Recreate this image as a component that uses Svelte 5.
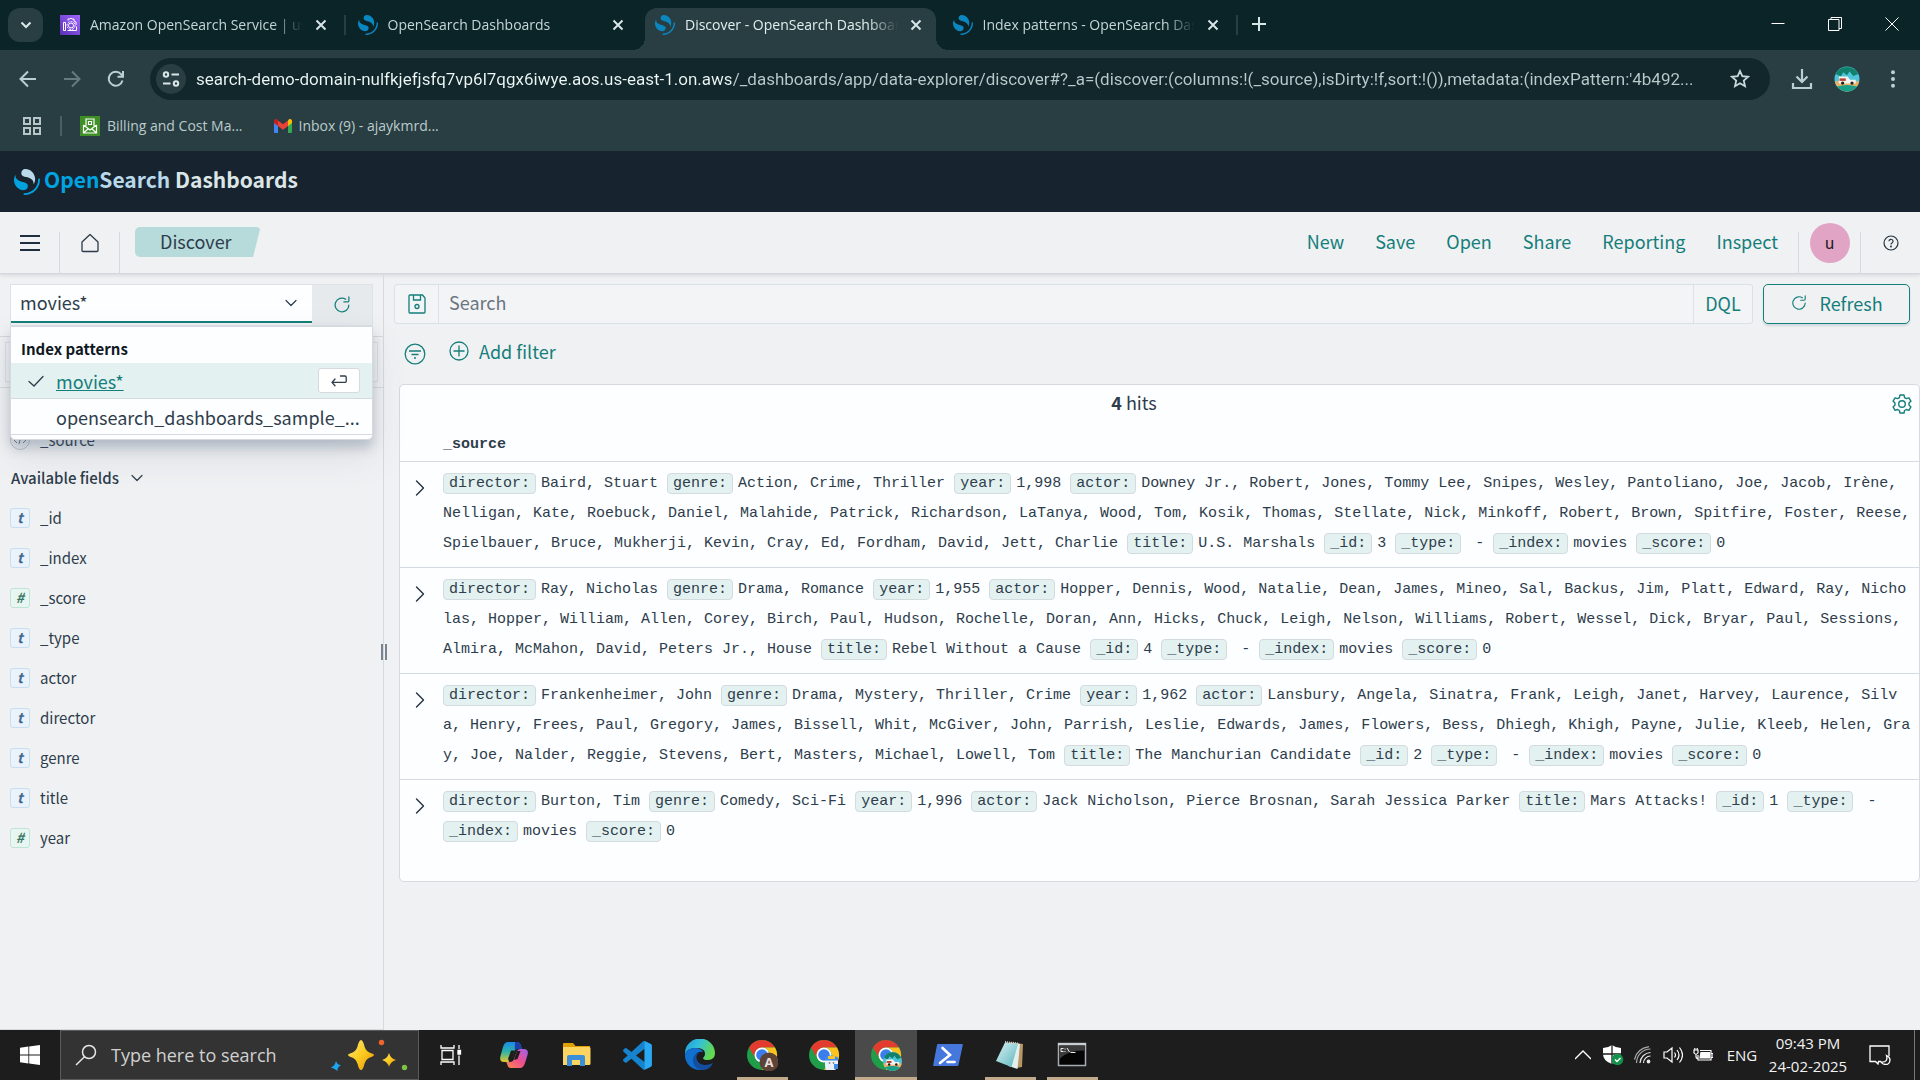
<script>
  const tabs = [
    { title: 'Amazon OpenSearch Service | us-east-1', icon: 'aws' },
    { title: 'OpenSearch Dashboards', icon: 'os' },
    { title: 'Discover - OpenSearch Dashboards', icon: 'os', active: true },
    { title: 'Index patterns - OpenSearch Dashboards', icon: 'os' }
  ];

  const url =
    "search-demo-domain-nulfkjefjsfq7vp6l7qgx6iwye.aos.us-east-1.on.aws/_dashboards/app/data-explorer/discover#?_a=(discover:(columns:!(_source),isDirty:!f,sort:!()),metadata:(indexPattern:'4b492...";

  const menu = ['New', 'Save', 'Open', 'Share', 'Reporting', 'Inspect'];

  const fields = [
    ['t', '_id'],
    ['t', '_index'],
    ['#', '_score'],
    ['t', '_type'],
    ['t', 'actor'],
    ['t', 'director'],
    ['t', 'genre'],
    ['t', 'title'],
    ['#', 'year']
  ];

  const nbsp = '\u00a0';
  const meta = (id) => [
    ['_id', id],
    ['_type', nbsp + '-'],
    ['_index', 'movies'],
    ['_score', '0']
  ];

  const hits = [
    [
      ['director', 'Baird, Stuart'],
      ['genre', 'Action, Crime, Thriller'],
      ['year', '1,998'],
      ['actor', 'Downey Jr., Robert, Jones, Tommy Lee, Snipes, Wesley, Pantoliano, Joe, Jacob, Irène, Nelligan, Kate, Roebuck, Daniel, Malahide, Patrick, Richardson, LaTanya, Wood, Tom, Kosik, Thomas, Stellate, Nick, Minkoff, Robert, Brown, Spitfire, Foster, Reese, Spielbauer, Bruce, Mukherji, Kevin, Cray, Ed, Fordham, David, Jett, Charlie'],
      ['title', 'U.S. Marshals'],
      ...meta('3')
    ],
    [
      ['director', 'Ray, Nicholas'],
      ['genre', 'Drama, Romance'],
      ['year', '1,955'],
      ['actor', 'Hopper, Dennis, Wood, Natalie, Dean, James, Mineo, Sal, Backus, Jim, Platt, Edward, Ray, Nicholas, Hopper, William, Allen, Corey, Birch, Paul, Hudson, Rochelle, Doran, Ann, Hicks, Chuck, Leigh, Nelson, Williams, Robert, Wessel, Dick, Bryar, Paul, Sessions, Almira, McMahon, David, Peters Jr., House'],
      ['title', 'Rebel Without a Cause'],
      ...meta('4')
    ],
    [
      ['director', 'Frankenheimer, John'],
      ['genre', 'Drama, Mystery, Thriller, Crime'],
      ['year', '1,962'],
      ['actor', 'Lansbury, Angela, Sinatra, Frank, Leigh, Janet, Harvey, Laurence, Silva, Henry, Frees, Paul, Gregory, James, Bissell, Whit, McGiver, John, Parrish, Leslie, Edwards, James, Flowers, Bess, Dhiegh, Khigh, Payne, Julie, Kleeb, Helen, Gray, Joe, Nalder, Reggie, Stevens, Bert, Masters, Michael, Lowell, Tom'],
      ['title', 'The Manchurian Candidate'],
      ...meta('2')
    ],
    [
      ['director', 'Burton, Tim'],
      ['genre', 'Comedy, Sci-Fi'],
      ['year', '1,996'],
      ['actor', 'Jack Nicholson, Pierce Brosnan, Sarah Jessica Parker'],
      ['title', 'Mars Attacks!'],
      ...meta('1')
    ]
  ];

  const apps = [
    { name: 'Copilot', icon: 'copilot' },
    { name: 'File Explorer', icon: 'folder' },
    { name: 'Visual Studio Code', icon: 'vscode' },
    { name: 'Microsoft Edge', icon: 'edge' },
    { name: 'Chrome profile A', icon: 'chromeA', open: true },
    { name: 'Chrome', icon: 'chromeB' },
    { name: 'Chrome beach profile', icon: 'chromeC', active: true },
    { name: 'PowerShell', icon: 'powershell' },
    { name: 'Notepad', icon: 'notepad', open: true },
    { name: 'Command Prompt', icon: 'cmd', open: true }
  ];
</script>

{#snippet mark(size, main, top)}
  <svg width={size} height={size} viewBox="0 0 64 64" aria-hidden="true">
    <path fill={main} d="M61.7374 23.5C60.4878 23.5 59.4748 24.513 59.4748 25.7626C59.4748 44.3813 44.3813 59.4748 25.7626 59.4748C24.513 59.4748 23.5 60.4878 23.5 61.7374C23.5 62.987 24.513 64 25.7626 64C46.8805 64 64 46.8805 64 25.7626C64 24.513 62.987 23.5 61.7374 23.5Z" />
    <path fill={top} d="M48.0814 38C50.2572 34.4505 52.3615 29.7178 51.9475 23.0921C51.0899 9.36725 38.6589 -1.04463 26.9206 0.0837327C22.3253 0.525465 17.6068 4.2712 18.026 10.9805C18.2082 13.8961 19.6352 15.6169 21.9544 16.9399C24.1618 18.1992 26.9978 18.9969 30.2128 19.9011C34.0962 20.9934 38.6009 22.2203 42.063 24.7717C46.2125 27.8295 49.0491 31.3743 48.0814 38Z" />
    <path fill={main} d="M3.91861 14C1.74276 17.5495 -0.361506 22.2822 0.0524931 28.9079C0.910072 42.6327 13.3411 53.0446 25.0794 51.9163C29.6747 51.4745 34.3932 47.7288 33.974 41.0195C33.7918 38.1039 32.3647 36.3831 30.0456 35.0601C27.8382 33.8008 25.0022 33.0031 21.7872 32.0989C17.9038 31.0066 13.3991 29.7797 9.93694 27.2283C5.78746 24.1705 2.95092 20.6257 3.91861 14Z" />
  </svg>
{/snippet}

{#snippet reload(size)}
  <svg width={size} height={size} viewBox="0 0 16 16" fill="currentColor" aria-hidden="true">
    <path d="M11.228 2.942a.5.5 0 1 1-.538.842A5 5 0 1 0 13 8a.5.5 0 1 1 1 0 6 6 0 1 1-2.772-5.058ZM14 1.5v3A1.5 1.5 0 0 1 12.5 6h-3a.5.5 0 0 1 0-1h3a.5.5 0 0 0 .5-.5v-3a.5.5 0 1 1 1 0Z" />
  </svg>
{/snippet}

{#snippet chevron()}
  <svg width="16" height="16" viewBox="0 0 16 16" fill="none" stroke="currentColor" stroke-width="1.2" stroke-linecap="round" stroke-linejoin="round" aria-hidden="true">
    <path d="M3 5.5l5 5 5-5" />
  </svg>
{/snippet}

{#snippet beach(x, y, r)}
  <g transform="translate({x} {y}) scale({r})">
    <circle r="1" fill="#4fc3d9" />
    <path d="M-.9-.4A1 1 0 0 1 .9-.4L.5-.25.2-.6 0-.3-.3-.55-.5-.2z" fill="#11806d" />
    <path d="M-.98.2Q0 0 .98.2A1 1 0 0 1-.98.2z" fill="#e9b26b" />
    <path d="M-.8.6Q0 .35.8.6A1 1 0 0 1-.8.6z" fill="#19a08a" />
    <path d="M-.65-.2h.7l.2.25h.45v.3h-1.35z" fill="#f4f4f0" />
    <path d="M-.6-.05h.5v.2h-.5z" fill="#b5402f" />
    <circle cx="-.35" cy=".32" r=".13" fill="#222" />
    <circle cx=".4" cy=".32" r=".13" fill="#222" />
  </g>
{/snippet}

{#snippet chrome()}
  <circle cx="16" cy="16" r="15" fill="#1f9d48" />
  <path d="M3 8.5A15 15 0 0 1 29 8.5H16A7.5 7.5 0 0 0 9.5 19.75z" fill="#e33b2e" />
  <path d="M29 8.5A15 15 0 0 1 16 31l6.5-11.25A7.5 7.5 0 0 0 16 8.5z" fill="#fcc31e" />
  <circle cx="16" cy="16" r="7.5" fill="#fff" />
  <circle cx="16" cy="16" r="5.8" fill="#3b7ded" />
{/snippet}

<div class="screen">
  <header class="browser">
    <div class="strip">
      <button class="tab-search" aria-label="Search tabs">
        <svg width="12" height="12" viewBox="0 0 12 12" fill="none" stroke="#dce9ea" stroke-width="2"><path d="M1.5 3.5L6 8l4.500-4.500" /></svg>
      </button>
      <div class="tabs">
        {#each tabs as tab, i}
          <div class="tab" class:active={tab.active} class:ruled={i === 0 || i === 3}>
            {#if tab.icon === 'aws'}
              <svg width="20" height="20" viewBox="0 0 20 20" fill="none" stroke="#fff" aria-hidden="true">
                <defs><linearGradient id="aws" x1="0" y1="1" x2="1" y2="0"><stop stop-color="#5a30b5" /><stop offset="1" stop-color="#a166ff" /></linearGradient></defs>
                <rect width="20" height="20" fill="url(#aws)" stroke="none" />
                <circle cx="11" cy="10.500" r="2.500" />
                <circle cx="11" cy="10.500" r="4" stroke-dasharray="2 1" />
                <path d="M3.500 7.500v8h2v-8zM7.500 15.500h9v-4M8 5.500V4h2l1-1 1 1h2v2l2 1v3" />
              </svg>
            {:else}
              {@render mark(20, '#0c86c0', '#0c86c0')}
            {/if}
            <a class="tab-title" href="#tab-{i}">{tab.title}</a>
            <button class="tab-close" aria-label="Close tab">
              <svg width="12" height="12" viewBox="0 0 12 12" stroke="#d8e6e8" stroke-width="2"><path d="M1.500 1.500l9 9M10.500 1.500l-9 9" /></svg>
            </button>
          </div>
        {/each}
      </div>
      <button class="plain new-tab" aria-label="New tab">
        <svg width="14" height="14" viewBox="0 0 14 14" stroke="#d8e6e8" stroke-width="2"><path d="M7 0v14M0 7h14" /></svg>
      </button>
      <div class="window-controls">
        <button class="plain" aria-label="Minimise"><svg width="14" height="14" viewBox="0 0 14 14" stroke="#fff"><path d="M.5 6.500h13" /></svg></button>
        <button class="plain" aria-label="Restore"><svg width="14" height="14" viewBox="0 0 14 14" stroke="#fff" fill="none"><path d="M.5 2.500h10.500v11H.5zM3 2.500v-2h10.500v11H11" /></svg></button>
        <button class="plain" aria-label="Close"><svg width="14" height="14" viewBox="0 0 14 14" stroke="#fff"><path d="M.5.5l13 13M13.500.5l-13 13" /></svg></button>
      </div>
    </div>

    <div class="toolbar">
      <button class="plain nav-btn" aria-label="Back"><svg width="18" height="18" viewBox="0 0 18 18" fill="none" stroke="#b9d0d3" stroke-width="2"><path d="M17 9H2M9 1.500L1.500 9 9 16.500" /></svg></button>
      <button class="plain nav-btn" aria-label="Forward"><svg width="18" height="18" viewBox="0 0 18 18" fill="none" stroke="#657b7e" stroke-width="2"><path d="M1 9h15M9 1.500L16.500 9 9 16.500" /></svg></button>
      <button class="plain nav-btn" aria-label="Reload"><svg width="18" height="18" viewBox="0 0 18 18" fill="none" stroke="#b9d0d3" stroke-width="2"><path d="M15.500 10.500A7 7 0 1 1 14.200 4.300L16 6.200M16 1v5.800h-5.500" /></svg></button>
      <div class="omnibox">
        <button class="site-info" aria-label="Site information">
          <svg width="18" height="18" viewBox="0 0 18 18" fill="none" stroke="#d8e6e8" stroke-width="2"><circle cx="4" cy="4.500" r="2.200" /><path d="M9.500 4.500H17M1 13.500h7.500" /><circle cx="14" cy="13.500" r="2.200" /></svg>
        </button>
        <input class="url" type="text" aria-label="Address" value={url} />
        <button class="plain" aria-label="Bookmark this page"><svg width="20" height="20" viewBox="0 0 20 20" fill="none" stroke="#c9dadc" stroke-width="1.800"><path d="M10 2l2.300 5.200 5.700.6-4.200 3.800 1.200 5.600-5-2.900-5 2.900 1.200-5.600L2 7.800l5.700-.6z" /></svg></button>
      </div>
      <div class="toolbar-end">
        <button class="plain" aria-label="Downloads"><svg width="22" height="22" viewBox="0 0 22 22" fill="none" stroke="#b9d0d3" stroke-width="2.200"><path d="M11 1v13M5.500 8.500L11 14l5.500-5.500M2 15v5h18v-5" /></svg></button>
        <button class="plain" aria-label="Profile"><svg width="26" height="26" viewBox="0 0 26 26">{@render beach(13, 13, 12.5)}</svg></button>
        <button class="plain" aria-label="Menu"><svg width="6" height="18" viewBox="0 0 6 18" fill="#b9d0d3"><circle cx="3" cy="2.200" r="2" /><circle cx="3" cy="9" r="2" /><circle cx="3" cy="15.800" r="2" /></svg></button>
      </div>
    </div>

    <nav class="bookmarks" aria-label="Bookmarks">
      <button class="plain" aria-label="Apps"><svg width="20" height="20" viewBox="0 0 20 20" fill="none" stroke="#b7c6c8" stroke-width="2"><path d="M2 2h6v6H2zM12 2h6v6h-6zM2 12h6v6H2zM12 12h6v6h-6z" /></svg></button>
      <span class="rule"></span>
      <a href="#billing">
        <svg width="20" height="20" viewBox="0 0 20 20" fill="none" stroke="#fff" stroke-width="1.200" aria-hidden="true"><rect width="20" height="20" fill="#3f8f26" stroke="none" /><path d="M3.500 9v8h13V9M3.500 9l6.500 5 6.500-5M3.500 17l4.500-4M16.500 17L12 13M6 10V3h8v7M8.500 5.500h3v3h-3z" /></svg>
        Billing and Cost Ma...
      </a>
      <a href="#inbox">
        <svg width="18" height="14" viewBox="0 0 18 14" aria-hidden="true"><path d="M0 2v11a1 1 0 0 0 1 1h3V5z" fill="#4285f4" /><path d="M18 2v11a1 1 0 0 1-1 1h-3V5z" fill="#34a853" /><path d="M14 1.500V7l4-3V2c0-1.800-2-2.500-3.200-1.500z" fill="#fbbc04" /><path d="M0 2v2l4 3V1.500L3.200.5C2-.5 0 .2 0 2z" fill="#c5221f" /><path d="M4 1.500V7l5 3.800L14 7V1.500L9 5.300z" fill="#ea4335" /></svg>
        Inbox (9) - ajaykmrd...
      </a>
    </nav>
  </header>

  <div class="brandbar">
    <a class="brand" href="#home">
      {@render mark(26, '#00a3e0', '#b9d9eb')}
      <span class="brand-text"><span class="open">Open</span><span class="search">Search</span> Dashboards</span>
    </a>
  </div>

  <nav class="appnav" aria-label="Application">
    <button class="plain nav-cell menu-cell" aria-label="Toggle navigation"><svg width="20" height="16" viewBox="0 0 20 16" stroke="#1f2f3f" stroke-width="2"><path d="M0 1h20M0 8h20M0 15h20" /></svg></button>
    <button class="plain nav-cell" aria-label="Home"><svg width="18" height="20" viewBox="0 0 18 20" fill="none" stroke="#2c3b49" stroke-width="1.300" stroke-linejoin="round"><path d="M9 1.500L1 9v8.500q0 1 1 1h14q1 0 1-1V9z" /></svg></button>
    <div class="crumb-wrap"><span class="crumb">Discover</span></div>
    <div class="menu">
      {#each menu as item}<button class="plain">{item}</button>{/each}
    </div>
    <button class="plain nav-cell user-cell" aria-label="User menu"><span class="avatar">u</span></button>
    <button class="plain nav-cell" aria-label="Help"><svg width="16" height="16" viewBox="0 0 16 16" fill="none" stroke="#24333f" stroke-width="1.200"><circle cx="8" cy="8" r="7" /><path d="M6 6.300a2 2 0 1 1 3 1.700q-1 .5-1 1.500" /><circle cx="8" cy="11.600" r=".4" fill="#24333f" /></svg></button>
  </nav>

  <div class="workspace">
    <aside class="sidebar">
      <div class="source">
        <div class="source-box">
          <div class="select-wrap">
            <select aria-label="Data source"><option>movies*</option><option>opensearch_dashboards_sample_data</option></select>
            {@render chevron()}
          </div>
          <button class="source-reload" aria-label="Reload sources">{@render reload(20)}</button>
        </div>
        <div class="popup" role="listbox" aria-label="Index patterns">
          <div class="popup-title">Index patterns</div>
          <button class="option chosen" role="option" aria-selected="true">
            <svg width="16" height="16" viewBox="0 0 16 16" fill="none" stroke="#2f3d4a" stroke-width="1.300" stroke-linecap="round"><path d="M1 8.500L6 13 15 3.500" /></svg>
            <span class="option-label">movies*</span>
            <span class="key"><svg width="16" height="12" viewBox="0 0 16 12" fill="none" stroke="#2f3d4a" stroke-width="1.300" stroke-linecap="round" stroke-linejoin="round"><path d="M9.500 1H14q1.200 0 1.200 1.200v4q0 1.200-1.200 1.200H1M4 4L1 7.400l3 3.400" /></svg></span>
          </button>
          <button class="option" role="option" aria-selected="false">
            <span class="blank"></span>
            <span class="option-label">opensearch_dashboards_sample_...</span>
          </button>
        </div>
      </div>
      <div class="facet"><input type="search" aria-label="Search field names" /></div>
      <ul class="fields selected">
        <li><span class="token round"><svg width="14" height="10" viewBox="0 0 14 10" fill="none" stroke="#6a7683"><path d="M4 2L1 5l3 3M10 2l3 3-3 3M8 1L6 9" /></svg></span>_source</li>
      </ul>
      <button class="plain fields-title">Available fields {@render chevron()}</button>
      <ul class="fields">
        {#each fields as [kind, name]}
          <li><span class="token" class:number={kind === '#'}>{kind}</span>{name}</li>
        {/each}
      </ul>
      <span class="grip"></span>
    </aside>

    <main class="discover">
      <div class="query">
        <div class="query-box">
          <button class="plain save" aria-label="Saved queries"><svg width="18" height="20" viewBox="0 0 18 20" fill="none" stroke="currentColor" stroke-width="1.300"><path d="M1 2q0-1 1-1h12.500L17 4v14q0 1-1 1H2q-1 0-1-1zM5.500 1v5h7V1" /><circle cx="9" cy="12.500" r="2" /></svg></button>
          <input type="text" placeholder="Search" aria-label="Search" />
          <button class="plain dql">DQL</button>
        </div>
        <button class="refresh">{@render reload(18)}Refresh</button>
      </div>
      <div class="filters">
        <button class="plain" aria-label="Filter options"><svg width="22" height="22" viewBox="0 0 22 22" fill="none" stroke="currentColor" stroke-width="1.300"><circle cx="11" cy="11" r="9.800" /><path d="M5 8h12M7.500 11.500h7M10 15h2" /></svg></button>
        <button class="plain add"><svg width="20" height="20" viewBox="0 0 20 20" fill="none" stroke="currentColor" stroke-width="1.300"><circle cx="10" cy="10" r="9" /><path d="M10 4.500v11M4.500 10h11" /></svg>Add filter</button>
      </div>
      <section class="panel">
        <div class="panel-head">
          <p><strong>4</strong> hits</p>
          <button class="plain gear" aria-label="Table settings"><svg width="20" height="20" viewBox="0 0 20 20" fill="none" stroke="currentColor" stroke-width="1.400" stroke-linejoin="round"><circle cx="10" cy="10" r="3.300" /><path d="M8 1h4l.6 2.600 1.700 1 2.600-.8 2 3.400-1.900 1.900v2l1.900 1.800-2 3.400-2.600-.8-1.700 1L12 19H8l-.6-2.500-1.700-1-2.600.8-2-3.400L3 11.100v-2L1.100 7.200l2-3.400 2.600.8 1.700-1z" /></svg></button>
        </div>
        <table>
          <thead><tr><th class="toggle"></th><th scope="col">_source</th></tr></thead>
          <tbody>
            {#each hits as hit}
              <tr>
                <td class="toggle"><button class="plain" aria-label="Expand row"><svg width="10" height="16" viewBox="0 0 10 16" fill="none" stroke="#24333f" stroke-width="1.400" stroke-linecap="round" stroke-linejoin="round"><path d="M1.500 1L8.500 8l-7 7" /></svg></button></td>
                <td><dl>{#each hit as [key, value]}<dt>{key + ':'}</dt><dd>{value}</dd>{' '}{/each}</dl></td>
              </tr>
            {/each}
          </tbody>
        </table>
      </section>
    </main>
  </div>

  <footer class="taskbar">
    <button class="plain start" aria-label="Start"><svg width="20" height="20" viewBox="0 0 20 20" fill="#fff"><path d="M0 2.800l8.400-1.200v8H0zM9.200 1.500L20 0v9.600H9.200zM0 10.400h8.400v8L0 17.200zM9.200 10.400H20V20L9.200 18.500z" /></svg></button>
    <div class="task-search">
      <svg width="22" height="22" viewBox="0 0 22 22" fill="none" stroke="#e6e6e6" stroke-width="1.500" aria-hidden="true"><circle cx="14" cy="8" r="6.500" /><path d="M9.500 12.800L1 21" /></svg>
      <input type="text" placeholder="Type here to search" aria-label="Type here to search" />
      <svg width="78" height="34" viewBox="0 0 78 34" aria-hidden="true">
        <defs><linearGradient id="gold" x1="0" y1="0" x2="1" y2="1"><stop stop-color="#ffe680" /><stop offset=".5" stop-color="#fbcb1f" /><stop offset="1" stop-color="#e8930c" /></linearGradient></defs>
        <path d="M30 2q2 0 3.500 6.500Q35 14 41 15.500q4 1.500 0 3.200-6 1.500-7.500 7Q32 32 30 32t-3.500-6.300q-1.500-5.500-7.500-7-4-1.700 0-3.200 6-1.500 7.500-7Q28 2 30 2z" fill="url(#gold)" />
        <path d="M58 15q1.500 5.500 7 7-5.500 1.500-7 7-1.500-5.500-7-7 5.500-1.500 7-7z" fill="url(#gold)" />
        <path d="M5 23q1 3.500 5 4.500-4 1-3.500 5.500-2.500-2.500-6.500-3.500 4-1.500 5-6.500z" fill="#1aa7f0" />
        <circle cx="50.500" cy="4.500" r="2.700" fill="#f0642d" /><circle cx="73.500" cy="29.500" r="2.700" fill="#7cc33f" />
      </svg>
    </div>
    <button class="plain task-view" aria-label="Task view"><svg width="22" height="20" viewBox="0 0 22 20" fill="none" stroke="#fff" stroke-width="1.300"><path d="M1 0v3h13V0M1 20v-3h13v3M2 5.500h11v9H2zM19 0v4M19 10.500V20" /><path d="M18 5.500h2.500V9H18z" fill="#fff" /></svg></button>
    <div class="apps">
      {#each apps as app}
        <button class="app" class:active={app.active} class:open={app.open} aria-label={app.name}>
          <svg width="32" height="32" viewBox="0 0 32 32" aria-hidden="true">
            {#if app.icon === 'copilot'}
              <defs>
                <linearGradient id="cpl" x1="0" y1="0" x2="0" y2="1"><stop stop-color="#1b8ae8" /><stop offset=".5" stop-color="#2fb5a5" /><stop offset="1" stop-color="#e8c52a" /></linearGradient>
                <linearGradient id="cpr" x1="1" y1="0" x2="0" y2="1"><stop stop-color="#9a63f0" /><stop offset=".5" stop-color="#ef4f8d" /><stop offset="1" stop-color="#f98b4a" /></linearGradient>
              </defs>
              <path d="M10 3h9q3 0 4 4l.8 3H19q-2 0-3 3l-2.500 7q-1 3-4 3H6q-5 0-3.500-6L5 8q1.500-5 5-5z" fill="url(#cpl)" />
              <path d="M17 3h2q3 0 4 4l.8 3H19q-1.500 0-2.300 1.500z" fill="#1d3fa8" />
              <path d="M22 29h-9q-3 0-4-4l-.7-2H12q3 0 4-3l2.500-7q1-3 4-3H26q5 0 3.500 6L27 24q-1.500 5-5 5z" fill="url(#cpr)" />
              <path d="M13 11.500h3.700L14 20q-1 3-2.500 3L10 20z" fill="#1e1e1e" />
              <path d="M19 12h3.500l-3 8-3.500 1z" fill="#1e1e1e" />
            {:else if app.icon === 'folder'}
              <path d="M3 5q0-1 1-1h9l2.500 3H30v3H3z" fill="#e0a105" />
              <path d="M3 8h26q1.500 0 1.500 1.500v15q0 1.500-1.500 1.500H3z" fill="#fcd462" />
              <path d="M7 27v-9q0-2 2-2h14q2 0 2 2v9h-5v-6h-8v6z" fill="#3b8fd8" />
            {:else if app.icon === 'vscode'}
              <g transform="translate(1 2) scale(1.200)"><path d="M23.150 2.587L18.210.21a1.494 1.494 0 0 0-1.705.29l-9.460 8.630-4.120-3.128a.999.999 0 0 0-1.276.057L.327 7.261A1 1 0 0 0 .326 8.740L3.899 12 .326 15.260a1 1 0 0 0 .001 1.479L1.650 17.940a.999.999 0 0 0 1.276.057l4.120-3.128 9.460 8.630a1.492 1.492 0 0 0 1.704.29l4.942-2.377A1.500 1.500 0 0 0 24 20.060V3.939a1.500 1.500 0 0 0-.85-1.352zm-5.146 14.861L10.826 12l7.178-5.448v10.896z" fill="#1583cd" /><path d="M18 .1l5.150 2.487A1.500 1.500 0 0 1 24 3.940v16.120a1.500 1.500 0 0 1-.85 1.352L18 23.900z" fill="#2aa9f2" /></g>
            {:else if app.icon === 'edge'}
              <defs><linearGradient id="edg" x1="0" y1="0" x2="1" y2=".4"><stop stop-color="#1f9be0" /><stop offset=".5" stop-color="#35c1d8" /><stop offset="1" stop-color="#62d94e" /></linearGradient></defs>
              <path d="M1 15A15 15 0 0 1 31 14q0 7-7 7-5 0-5-2 2-1.500 2-4.500Q21 9 12 9 3 9 1 15z" fill="url(#edg)" />
              <path d="M1 15q2-6 10-6 6 0 8 4-4-1-7 2-5 6 0 11 4 4 9 3.500-3 1.500-6 1.500A15 15 0 0 1 1 15z" fill="#1170cf" />
              <path d="M19 13q-7 0-6.500 6.500Q14 26 21 26q4 0 8-2-3 7-10 7-8 0-10-8-1-9 10-10z" fill="#134f9e" />
              <path d="M16 19q0-4 4.500-4-.2 2-1.500 3.500-.5 1 .5 1.700-3.500 1-3.500-1.200z" fill="#1b1b1b" />
            {:else if app.icon === 'chromeA'}
              {@render chrome()}
              <circle cx="23" cy="23" r="9.500" fill="#5d4238" />
              <text x="23" y="28" text-anchor="middle" class="badge-letter">A</text>
            {:else if app.icon === 'chromeB'}
              {@render chrome()}
              <path d="M17 19h13v9l-3 3H18l-1-4z" fill="#e9f1fb" />
              <path d="M17 18.500q6-4 13 0v3H17z" fill="#3f8be6" /><path d="M20 17h7v3h-7z" fill="#f6c333" />
              <circle cx="21.500" cy="24" r=".8" fill="#555" /><circle cx="25.500" cy="24" r=".8" fill="#555" /><path d="M26 25h4v5h-4z" fill="#3f8be6" />
            {:else if app.icon === 'chromeC'}
              {@render chrome()}
              {@render beach(22.5, 22.5, 9.5)}
            {:else if app.icon === 'powershell'}
              <path d="M6 5h24q1 0 .8 1l-4.300 20q-.2 1-1.200 1H2q-1 0-.8-1L5 6q.2-1 1-1z" fill="#4677dc" />
              <path d="M10.500 9l7.500 7-10 8" fill="none" stroke="#fff" stroke-width="2.600" stroke-linecap="round" /><path d="M15.500 23h7" stroke="#fff" stroke-width="2.600" stroke-linecap="round" />
            {:else if app.icon === 'notepad'}
              <path d="M15 3l14 2-1 23-6 1z" fill="#b99763" />
              <path d="M12 3.500l14 1.500-2.500 25-9-3z" fill="#e3efef" />
              <defs><linearGradient id="npd" x1="0" y1="0" x2="1" y2="1"><stop stop-color="#d9f3f4" /><stop offset="1" stop-color="#5bb4bd" /></linearGradient></defs>
              <path d="M11 3.500l13 1.500-6.500 23L2 22z" fill="url(#npd)" />
              <path d="M11 3l14 1.500" stroke="#c9c9c9" stroke-width="2" stroke-dasharray="1 1" />
            {:else if app.icon === 'cmd'}
              <path d="M2.500 4.500h27v22h-27z" fill="#050505" stroke="#a7adb3" stroke-width="1.500" />
              <path d="M2 4h28v2.500H2z" fill="#c9ced3" />
              <path d="M3.300 6.500h25.400v5Q12 11 3.300 20z" fill="#3b3b3b" />
              <path d="M5 9.500h2.500M5 12.500h2.500M5 9.500v3M9 9.500v1M9 12v1M11 9l2.500 4M14.500 13.500h5" stroke="#eee" stroke-width="1" fill="none" />
            {/if}
          </svg>
        </button>
      {/each}
    </div>
    <div class="tray">
      <button class="plain" aria-label="Show hidden icons"><svg width="16" height="16" viewBox="0 0 16 16" fill="none" stroke="#fff" stroke-width="1.300"><path d="M0 12l8-8 8 8" /></svg></button>
      <button class="plain" aria-label="Windows Security"><svg width="22" height="22" viewBox="0 0 22 22"><path d="M10 1q4 3 9 3v6q0 7-9 10Q1 17 1 10V4q5 0 9-3z" fill="#fff" /><path d="M10 1v19M1 10h18" stroke="#1c1c1c" stroke-width="1.300" /><circle cx="15.500" cy="15.500" r="5.800" fill="#12924a" /><path d="M13 15.500l2 2 3.500-3.500" fill="none" stroke="#fff" stroke-width="1.500" /></svg></button>
      <button class="plain" aria-label="Network"><svg width="18" height="18" viewBox="0 0 18 18" fill="none" stroke="#e8e8e8" stroke-width="1.200"><circle cx="14.500" cy="15.500" r="1.300" fill="#fff" /><path d="M9.500 17A7 7 0 0 1 16.500 10M6 17A11 11 0 0 1 16.500 6.500" /><path d="M2.500 17A14 14 0 0 1 16.500 3M.5 13.500Q3 2.500 15 .6" stroke="#aaa" /></svg></button>
      <button class="plain" aria-label="Volume"><svg width="20" height="18" viewBox="0 0 20 18" fill="none" stroke="#fff" stroke-width="1.200"><path d="M1 6h3l5-4v14l-5-4H1zM11.500 6.500q2 2.500 0 5M14 4q4 5 0 10M16.500 1.500q6 7.500 0 15" /></svg></button>
      <button class="plain" aria-label="Battery"><svg width="20" height="16" viewBox="0 0 20 16" fill="none" stroke="#fff" stroke-width="1.200"><path d="M7 3.500h11v9.500H5V8M18.500 6.500H20v4h-1.500M1 3h4v3q-2 2.500-4 0zM1.800 1v2M4.200 1v2M3 7v2.500q0 2 2 2" /><path d="M8 5.500h8.500V11H7z" fill="#fff" /></svg></button>
      <button class="plain lang">ENG</button>
      <button class="plain clock"><span>09:43 PM</span><span>24-02-2025</span></button>
      <button class="plain notice" aria-label="Notifications"><svg width="22" height="20" viewBox="0 0 22 20" fill="none" stroke="#fff" stroke-width="1.300"><path d="M12 16.500H9.500L9 19l-2.500-2.500H1V1h19v10" /><path d="M17.500 10.500q2 7-5.500 6.500 1.500 2.500 5 2.500t4-4.500q0-3-3.500-4.500z" /></svg></button>
    </div>
  </footer>
</div>

<style>
  :global(body) {
    margin: 0;
    background: #f0f1f3;
  }
  .screen {
    --ui: 'Open Sans', sans-serif;
    --app: 'Noto Sans CJK SC', sans-serif;
    --mono: 'Liberation Mono', monospace;
    --teal: #147e7b;
    --ink: #2e3d4b;
    --line: #d6dade;
    min-height: 100vh;
    display: flex;
    flex-direction: column;
    font-family: var(--app);
    font-size: 18px;
    line-height: 24px;
    color: var(--ink);
  }
  .screen :is(button, input, select) {
    font: inherit;
    color: inherit;
  }
  .screen svg {
    flex: none;
  }
  a {
    color: inherit;
    text-decoration: none;
  }
  button {
    cursor: pointer;
  }
  .plain {
    display: flex;
    align-items: center;
    justify-content: center;
    padding: 0;
    border: 0;
    background: none;
  }

  /* Browser window */
  .browser {
    font-family: var(--ui);
    font-size: 14px;
    line-height: 20px;
    background: #283e42;
    color: #c5d6d8;
  }
  .strip {
    display: flex;
    align-items: stretch;
    height: 50px;
    background: #0b2427;
  }
  .tab-search {
    align-self: center;
    display: flex;
    align-items: center;
    justify-content: center;
    width: 35px;
    height: 34px;
    margin: 0 7px 0 8px;
    padding: 0;
    border: 0;
    border-radius: 12px;
    background: #283e42;
  }
  .tabs {
    display: flex;
    flex: 0 1 1190px;
    min-width: 0;
    padding-top: 8px;
  }
  .tab {
    position: relative;
    flex: 1 1 0;
    min-width: 0;
    display: flex;
    align-items: center;
    gap: 10px;
    margin-right: 7px;
    padding: 0 14px 8px 10px;
  }
  .tab-title {
    flex: 1;
    min-width: 0;
    overflow: hidden;
    white-space: nowrap;
    -webkit-mask-image: linear-gradient(90deg, #000 calc(100% - 30px), transparent);
    mask-image: linear-gradient(90deg, #000 calc(100% - 30px), transparent);
  }
  .tab-close {
    display: flex;
    margin-left: 2px;
    padding: 0;
    border: 0;
    background: none;
  }
  .tab.active {
    background: #283e42;
    border-radius: 12px 12px 0 0;
    color: #e3eeef;
  }
  .tab.active::before,
  .tab.active::after {
    content: '';
    position: absolute;
    bottom: 0;
    width: 12px;
    height: 12px;
  }
  .tab.active::before {
    right: 100%;
    background: radial-gradient(circle at 0 0, transparent 12px, #283e42 12px);
  }
  .tab.active::after {
    left: 100%;
    background: radial-gradient(circle at 100% 0, transparent 12px, #283e42 12px);
  }
  .tab.ruled::after {
    content: '';
    position: absolute;
    right: -5px;
    top: 7px;
    width: 2px;
    height: 20px;
    background: #283e42;
  }
  .new-tab {
    width: 38px;
    padding-bottom: 2px;
  }
  .window-controls {
    display: flex;
    margin-left: auto;
  }
  .window-controls button {
    width: 57px;
    padding-bottom: 2px;
  }
  .toolbar {
    display: flex;
    align-items: center;
    padding: 8px 17px 0 6px;
  }
  .nav-btn {
    width: 44px;
    height: 42px;
  }
  .omnibox {
    flex: 1;
    min-width: 0;
    display: flex;
    align-items: center;
    gap: 5px;
    height: 42px;
    margin-left: 12px;
    padding: 0 20px 0 6px;
    border-radius: 21px;
    background: #11272b;
  }
  .site-info {
    display: flex;
    align-items: center;
    justify-content: center;
    width: 30px;
    height: 30px;
    margin-right: 5px;
    padding: 0;
    border: 0;
    border-radius: 50%;
    background: #283e42;
  }
  .screen .url {
    flex: 1;
    min-width: 0;
    padding: 0;
    border: 0;
    outline: 0;
    font-family: Roboto, 'Open Sans', sans-serif;
    font-size: 17px;
    line-height: 24px;
    background: linear-gradient(90deg, #eef6f6 535px, #b9cbcd 535px);
    background-clip: text;
    -webkit-background-clip: text;
    color: transparent;
  }
  .toolbar-end {
    display: flex;
    align-items: center;
    gap: 21px;
    padding-left: 21px;
  }
  .toolbar-end button:last-child {
    width: 20px;
    margin-left: 2px;
  }
  .bookmarks {
    display: flex;
    align-items: center;
    height: 51px;
    padding-left: 22px;
    color: #bccbcd;
  }
  .bookmarks .rule {
    width: 2px;
    height: 20px;
    margin: 0 18px;
    background: #466064;
  }
  .bookmarks a {
    display: flex;
    align-items: center;
    gap: 7px;
    margin-right: 31px;
  }

  /* Product header */
  .brandbar {
    display: flex;
    align-items: center;
    height: 61px;
    padding: 0 14px;
    background: #172430;
    box-sizing: border-box;
  }
  .brand {
    display: flex;
    align-items: center;
    gap: 4px;
  }
  .brand-text {
    padding-bottom: 6px;
    font-weight: 700;
    font-size: 21px;
    line-height: 32px;
    color: #dde6e6;
  }
  .open {
    color: #00a3e0;
  }
  .search {
    color: #b9d9eb;
  }
  .appnav {
    display: flex;
    align-items: stretch;
    height: 61px;
    border-bottom: 1px solid #d3d7dc;
    box-shadow: 0 2px 3px rgba(60, 80, 100, 0.12);
  }
  .nav-cell {
    align-self: flex-end;
    width: 60px;
    height: 41px;
    padding-bottom: 20px;
    box-sizing: border-box;
    border-left: 1px solid var(--line);
  }
  .nav-cell.menu-cell {
    width: 59px;
    border-left: 0;
  }
  .crumb-wrap {
    display: flex;
    align-items: flex-start;
    align-self: flex-end;
    height: 26px;
    padding: 0 0 15px 15px;
    border-left: 1px solid var(--line);
  }
  .crumb {
    margin-top: -5px;
    height: 30px;
    padding: 0 29px 0 25px;
    line-height: 28px;
    background: #b7dbdb;
    border-radius: 5px;
    clip-path: polygon(0 0, 100% 0, 94% 100%, 0 100%);
  }
  .menu {
    display: flex;
    align-items: center;
    gap: 31px;
    margin-left: auto;
    padding: 0 20px 4px 0;
    color: var(--teal);
  }
  .user-cell {
    width: 62px;
  }
  .avatar {
    flex: none;
    width: 40px;
    height: 40px;
    border-radius: 50%;
    background: #e2a4c4;
    color: #1c1720;
    font-size: 16px;
    line-height: 38px;
  }

  /* Sidebar */
  .workspace {
    flex: 1;
    display: flex;
    align-items: stretch;
  }
  .sidebar {
    position: relative;
    flex: none;
    width: 383px;
    border-right: 1px solid var(--line);
    border-bottom: 1px solid var(--line);
  }
  .source {
    position: relative;
    padding: 10px;
    border-bottom: 1px solid var(--line);
  }
  .source-box {
    display: flex;
    height: 40px;
    border: 1px solid #dbe3e6;
    background: #f0f1f3;
  }
  .select-wrap {
    flex: 1;
    display: grid;
    align-items: center;
    height: 38px;
    box-sizing: border-box;
    border-bottom: 2px solid var(--teal);
    background: #fdfeff;
  }
  .select-wrap > :global(*) {
    grid-area: 1 / 1;
  }
  .select-wrap > :global(svg) {
    justify-self: end;
    margin-right: 13px;
    pointer-events: none;
  }
  .select-wrap select {
    width: 100%;
    padding: 0 9px 3px;
    border: 0;
    outline: 0;
    background: none;
    appearance: none;
  }
  .source-reload {
    display: flex;
    align-items: center;
    justify-content: center;
    width: 60px;
    padding: 0;
    border: 0;
    background: #e6eaed;
  }
  .screen .source-reload {
    color: var(--teal);
  }
  .popup {
    position: absolute;
    z-index: 2;
    top: 52px;
    left: 10px;
    right: 10px;
    padding-bottom: 4px;
    border: 1px solid var(--line);
    border-radius: 0 0 5px 5px;
    background: #fdfeff;
    box-shadow: 0 8px 12px rgba(70, 90, 115, 0.28), 0 16px 36px rgba(70, 90, 115, 0.12);
  }
  .popup-title {
    padding: 10px 10px 2px;
    font-size: 15px;
    font-weight: 700;
    color: #10181f;
  }
  .option {
    display: flex;
    align-items: center;
    width: 100%;
    height: 36px;
    padding: 0 12px 0 17px;
    border: 0;
    border-bottom: 1px solid var(--line);
    background: none;
    text-align: left;
  }
  .option .blank {
    flex: none;
    width: 16px;
  }
  .option-label {
    flex: 1;
    min-width: 0;
    margin-left: 12px;
    overflow: hidden;
    white-space: nowrap;
  }
  .option.chosen {
    background: #e4f1f1;
  }
  .chosen .option-label {
    color: var(--teal);
    text-decoration: underline;
  }
  .key {
    display: flex;
    align-items: center;
    justify-content: center;
    width: 40px;
    height: 23px;
    border: 1px solid var(--line);
    border-radius: 3px;
    background: #fff;
  }
  .facet {
    padding: 5px;
    border-bottom: 1px solid var(--line);
  }
  .facet input {
    display: block;
    width: 100%;
    height: 40px;
    box-sizing: border-box;
    border: 1px solid #dbe0e4;
    background: #f3f4f6;
  }
  .fields {
    margin: 0;
    padding: 0 10px;
    list-style: none;
    font-size: 15px;
  }
  .fields.selected {
    padding-top: 32px;
  }
  .fields li {
    display: flex;
    align-items: center;
    gap: 10px;
    height: 40px;
  }
  .fields-title {
    gap: 10px;
    height: 36px;
    margin-bottom: 2px;
    padding: 0 11px;
  }
  .screen .fields-title {
    font-size: 15px;
    font-weight: 500;
  }
  .token {
    width: 18px;
    height: 18px;
    border: 1px solid #c9ddf0;
    border-radius: 3px;
    background: #eaf2fa;
    color: #456a92;
    font-size: 14px;
    font-weight: 700;
    font-style: italic;
    line-height: 17px;
    text-align: center;
  }
  .token.number {
    border-color: #bfe4d8;
    background: #e8f6f1;
    color: #387765;
  }
  .token.round {
    display: flex;
    align-items: center;
    justify-content: center;
    border-color: #bfc5cb;
    border-radius: 50%;
    background: #eceef0;
  }
  .grip {
    position: absolute;
    right: -4px;
    top: 370px;
    width: 2px;
    height: 16px;
    border: solid #7a848e;
    border-width: 0 2px;
  }

  /* Discover */
  .discover {
    flex: 1;
    min-width: 0;
    padding-top: 10px;
  }
  .query {
    display: flex;
    gap: 10px;
    height: 40px;
    padding: 0 10px;
  }
  .query-box {
    flex: 1;
    display: flex;
    border: 1px solid #d8e1e4;
    border-radius: 3px;
    background: #f3f4f6;
  }
  .query-box .save {
    width: 44px;
    border-right: 1px solid #dbe3e6;
  }
  .query-box input {
    flex: 1;
    min-width: 0;
    padding: 0 10px 4px;
    border: 0;
    outline: 0;
    background: none;
  }
  .query-box input::placeholder {
    color: #6b7580;
    opacity: 1;
  }
  .query-box .dql {
    width: 59px;
    padding-bottom: 3px;
    border-left: 1px solid #dbe3e6;
  }
  .refresh {
    display: flex;
    align-items: center;
    justify-content: center;
    gap: 11px;
    width: 147px;
    padding: 0 0 2px;
    border: 1px solid var(--teal);
    border-radius: 5px;
    background: none;
    box-shadow: 0 2px 2px rgba(40, 90, 100, 0.15);
  }
  .screen .discover button,
  .screen .menu button {
    color: var(--teal);
  }
  .filters {
    display: flex;
    align-items: center;
    gap: 23px;
    height: 24px;
    padding: 18px 20px;
  }
  .add {
    gap: 10px;
    margin-bottom: 6px;
  }
  .panel {
    margin-left: 15px;
    padding-bottom: 26px;
    border: 1px solid var(--line);
    border-radius: 5px;
    background: #fdfeff;
  }
  .panel-head {
    display: flex;
    align-items: center;
    height: 38px;
    padding-right: 7px;
  }
  .panel-head p {
    flex: 1;
    margin: 0;
    padding: 0 24px 5px 0;
    text-align: center;
  }
  table {
    width: 100%;
    border-collapse: collapse;
    table-layout: fixed;
    font-family: var(--mono);
    font-size: 15px;
    line-height: 30px;
  }
  th {
    height: 32px;
    padding: 6px 8px 0 0;
    text-align: left;
    vertical-align: middle;
    font-weight: 700;
  }
  td {
    padding: 7px 8px 8px 0;
    vertical-align: top;
    border-top: 1px solid #d3dae6;
  }
  .toggle {
    width: 43px;
    padding-right: 0;
  }
  .toggle button {
    width: 39px;
    height: 38px;
  }
  dl {
    margin: 0;
    word-break: break-all;
  }
  dt {
    display: inline-block;
    height: 19px;
    margin-right: 5px;
    padding: 0 5px;
    border: 1px solid #d3dbdf;
    border-radius: 4px;
    background: #e4f1f1;
    line-height: 19px;
  }
  dd {
    display: inline;
    margin: 0;
  }

  /* Taskbar */
  .taskbar {
    display: flex;
    align-items: stretch;
    height: 50px;
    background: #1d1d1d;
    color: #f2f2f2;
    font-family: var(--ui);
    font-size: 15px;
  }
  .start {
    width: 60px;
  }
  .task-search {
    display: flex;
    align-items: center;
    gap: 14px;
    width: 359px;
    padding: 0 9px 0 14px;
    box-sizing: border-box;
    border: 1px solid #5b5b5b;
    background: #333;
  }
  .task-search input {
    flex: 1;
    min-width: 0;
    padding: 0;
    border: 0;
    outline: 0;
    background: none;
  }
  .screen .task-search input {
    font-size: 18px;
  }
  .task-search input::placeholder {
    color: #d0d0d0;
    opacity: 1;
  }
  .task-view {
    width: 64px;
  }
  .apps {
    display: flex;
  }
  .app {
    display: flex;
    align-items: center;
    justify-content: center;
    width: 62px;
    padding: 0;
    border: 0;
    background: none;
  }
  .app.open {
    background: linear-gradient(#c2aa8c, #c2aa8c) center bottom / 51px 3px no-repeat;
  }
  .app.active {
    background: linear-gradient(#c2aa8c, #c2aa8c) center bottom / 100% 3px no-repeat #4a4a4a;
  }
  .badge-letter {
    font: 700 13px 'Open Sans', sans-serif;
    fill: #e9dfda;
  }
  .tray {
    display: flex;
    align-items: center;
    margin-left: auto;
    padding-right: 5px;
  }
  .tray button {
    width: 30px;
  }
  .tray .lang {
    width: 48px;
  }
  .tray .clock {
    flex-direction: column;
    width: 84px;
    line-height: 23px;
  }
  .tray .notice {
    width: 65px;
    height: 50px;
    padding-right: 5px;
    box-sizing: border-box;
    border-right: 1px solid #777;
  }
</style>
